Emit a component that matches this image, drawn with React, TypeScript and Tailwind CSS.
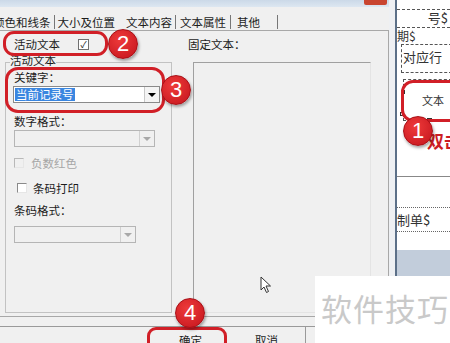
import React from 'react';

const Badge = ({ n, className }: { n: string; className: string }) => (
    <div
        className={`absolute w-[30px] h-[30px] rounded-full bg-[radial-gradient(circle_at_40%_35%,#ee3a3a,#c3141c)] border border-[#a80f16] shadow-[1px_2px_3px_rgba(0,0,0,0.35)] flex items-center justify-center text-white text-[22px] leading-none font-['Liberation_Sans',sans-serif] ${className}`}
    >
        {n}
    </div>
);

const Combo = ({ text, disabled, className }: { text?: string; disabled?: boolean; className: string }) => (
    <div
        className={`flex items-stretch h-[17px] border ${disabled ? 'border-[#b5b5b5] bg-[#f0f0f0]' : 'border-[#8a8a8a] bg-white'} ${className}`}
    >
        <div className="flex-1 flex items-center pl-[1px]">
            {text && (
                <span className="bg-[#3a86e0] text-white text-[11.5px] leading-[13px] px-[1px]">{text}</span>
            )}
        </div>
        <div
            className={`w-[15px] flex items-center justify-center border-l ${disabled ? 'border-[#d0d0d0]' : 'border-[#c8c8c8] bg-[#f4f4f4]'}`}
        >
            <div
                className={`w-0 h-0 border-l-[4px] border-r-[4px] border-t-[4px] border-l-transparent border-r-transparent ${disabled ? 'border-t-[#a8a8a8]' : 'border-t-black'}`}
            />
        </div>
    </div>
);

export default function App() {
    return (
        <div className="relative w-[450px] h-[343px] overflow-hidden flex bg-[#f0f0f0] text-[#1c1c1c] font-['Noto_Sans_CJK_SC',sans-serif] text-[11.5px] leading-[14px]">
            {/* dialog */}
            <div className="w-[389px] flex flex-col">
                <div className="h-[7px] bg-gradient-to-b from-[#cbd9e8] to-[#dde7f1] flex justify-end">
                    <div className="w-[23px] h-[5px] mr-[2px] bg-[#c9452f] rounded-b-[2px]" />
                </div>

                {/* tabs */}
                <div className="h-[23px] flex items-end pb-[1px] -ml-[7px] whitespace-nowrap text-[11.5px]">
                    <span className="pr-[3px] border-r border-[#777]">颜色和线条</span>
                    <span className="pl-[3px] pr-[11px]">大小及位置</span>
                    <span className="pr-[3px] border-r border-[#777]">文本内容</span>
                    <span className="pl-[4px] pr-[4px] border-r border-[#777]">文本属性</span>
                    <span className="pl-[6px] pr-[17px] border-r border-[#777]">其他</span>
                </div>

                {/* tab panel */}
                <div className="h-[287px] border-t border-r border-b border-[#a8a8a8] flex">
                    <div className="w-[172px] pl-[5px]">
                        <div className="h-[16px] mt-[5px] flex items-center pl-[9px]">
                            <span>活动文本</span>
                            <div className="ml-[18px] w-[11px] h-[11px] border border-[#707070] bg-white flex items-center justify-center text-[9px] leading-none">
                                ✓
                            </div>
                        </div>
                        <div className="mt-[10px] h-[251px] border border-[#c2c2c2] pl-[8px]">
                            <div className="-mt-[10px] h-[14px]">
                                <span className="-ml-[4px] bg-[#f0f0f0]">活动文本</span>
                            </div>
                            <div className="mt-[3px]">关键字：</div>
                            <Combo text="当前记录号" className="mt-[2px] -ml-[1px] w-[147px]" />
                            <div className="mt-[11px]">数字格式：</div>
                            <Combo disabled className="mt-[2px] w-[141px]" />
                            <div className="mt-[10px] flex items-center h-[12px] text-[#a6a6a6]">
                                <div className="w-[10px] h-[10px] border border-[#b8b8b8] border-r-[#e6e6e6] border-b-[#e6e6e6]" />
                                <span className="ml-[7px]">负数红色</span>
                            </div>
                            <div className="mt-[13px] flex items-center h-[12px] pl-[3px]">
                                <div className="w-[10px] h-[10px] border border-[#8a8a8a] border-r-[#e6e6e6] border-b-[#e6e6e6] bg-white" />
                                <span className="ml-[6px]">条码打印</span>
                            </div>
                            <div className="mt-[9px]">条码格式：</div>
                            <Combo disabled className="mt-[9px] w-[122px]" />
                        </div>
                    </div>
                    <div className="flex-1 pl-[16px]">
                        <div className="h-[16px] mt-[5px] flex items-center">固定文本：</div>
                        <div className="mt-[10px] ml-[5px] w-[178px] h-[251px] border border-[#a0a0a0] border-r-[#e4e4e4] border-b-[#e4e4e4]" />
                    </div>
                </div>

                {/* buttons */}
                <div className="mt-[9px] h-[17px] border-t border-[#9a9a9a] flex">
                    <div className="w-[153px]" />
                    <div className="w-[75px] flex justify-center pt-[8px] leading-none">确定</div>
                    <div className="w-[78px] border-r border-[#9a9a9a] flex justify-center pt-[8px] leading-none">
                        取消
                    </div>
                </div>
            </div>

            {/* gap + frame border */}
            <div className="w-[8px] bg-[#eef0f3] border-r-2 border-[#5c7088]" />

            {/* report designer canvas */}
            <div className="relative flex-1 flex flex-col">
                <div className="h-[250px] bg-white" />
                <div className="flex-1 bg-[#c2cddb]" />
                <div className="absolute left-0 right-0 top-[9px] border-t border-dashed border-[#555]" />
                <div className="absolute right-[2px] top-[11px] text-[13px] text-[#333]">号$</div>
                <div className="absolute left-0 right-0 top-[27px] border-t border-dashed border-[#555]" />
                <div className="absolute left-0 top-[29px] text-[12px] text-[#333]">期$</div>
                <div className="absolute left-[4px] -right-[2px] top-[44px] h-[29px] border border-dashed border-[#555] pl-[1px] pt-[5px] text-[13px] text-[#333]">
                    对应行
                </div>
                <div className="absolute left-[6px] -right-[2px] top-[79px] h-[42px] border border-dashed border-[#555] flex items-center pl-[18px] text-[11px] text-[#333]">
                    文本
                </div>
                <div className="absolute left-[3px] top-[112px] w-[4px] h-[4px] border border-[#333] bg-white" />
                <div className="absolute left-[4px] top-[90px] w-[4px] h-[4px] border border-[#333] bg-white" />
                <div className="absolute left-[30px] top-[118px] w-[5px] h-[4px] border border-[#333] bg-white" />
                <div className="absolute left-0 right-0 top-[176px] border-t border-[#888]" />
                <div className="absolute left-0 right-0 top-[207px] border-t border-dotted border-[#666]" />
                <div className="absolute left-0 top-[213px] text-[13px] text-[#333]">制单$</div>
                <div className="absolute left-0 right-0 top-[231px] border-t border-dotted border-[#666]" />
                <div className="absolute left-[30px] top-[134px] text-[17px] font-bold text-[#cc1d24] whitespace-nowrap">
                    双击
                </div>
            </div>

            {/* annotations */}
            <div className="absolute left-[3px] top-[31px] w-[105px] h-[25px] rounded-[11px] border-[3px] border-[#d11f27]" />
            <Badge n="2" className="left-[108px] top-[29px]" />
            <div className="absolute left-[5px] top-[67px] w-[160px] h-[46px] rounded-[13px] border-[3px] border-[#d11f27]" />
            <Badge n="3" className="left-[161px] top-[75px]" />
            <div className="absolute left-[401px] top-[80px] w-[60px] h-[42px] rounded-[12px] border-[3px] border-[#d11f27]" />
            <Badge n="1" className="left-[403px] top-[116px]" />
            <div className="absolute left-[147px] top-[327px] w-[80px] h-[24px] rounded-[9px] border-[3px] border-[#d11f27]" />
            <Badge n="4" className="left-[175px] top-[298px]" />

            {/* mouse cursor */}
            <svg className="absolute left-[260px] top-[276px]" width="12" height="18" viewBox="0 0 12 18">
                <path d="M1 1 L1 14 L4 11 L6.5 16.5 L8.5 15.5 L6 10 L10.5 10 Z" fill="white" stroke="#333" strokeWidth="1" />
            </svg>

            {/* watermark */}
            <div className="absolute left-[315px] top-[276px] w-[135px] h-[67px] bg-white flex items-center justify-center">
                <span className="text-[31px] leading-none text-[#c9c9c9] tracking-[1px] -mt-[4px] ml-[5px]">软件技巧</span>
            </div>
        </div>
    );
}
